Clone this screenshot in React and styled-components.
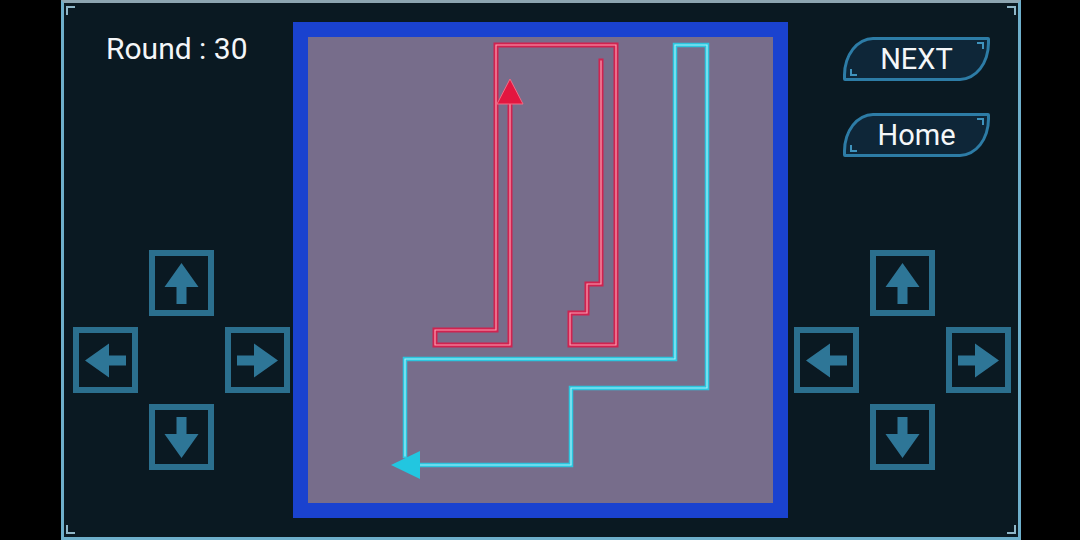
import React from "react";
import styled, { createGlobalStyle } from "styled-components";

const GlobalStyle = createGlobalStyle`
  html, body { margin: 0; padding: 0; background: #000; }
  body { font-family: Roboto, "Liberation Sans", sans-serif; }
`;

export const Page = styled.div`
  width: 1080px;
  height: 540px;
  display: flex;
  background: #000;
  overflow: hidden;
`;

export const Frame = styled.div`
  position: relative;
  box-sizing: border-box;
  margin-left: 61px;
  width: 960px;
  height: 540px;
  border: 3px solid #6eafcb;
  border-top-color: #8da5b1;
  background: #0a1922;
  display: flex;
  align-items: center;
`;

const cornerPos = {
  tl: "top: 3px; left: 2px; border-top-width: 2px; border-left-width: 2px;",
  tr: "top: 3px; right: 2px; border-top-width: 2px; border-right-width: 2px;",
  bl: "bottom: 3px; left: 2px; border-bottom-width: 2px; border-left-width: 2px;",
  br: "bottom: 3px; right: 2px; border-bottom-width: 2px; border-right-width: 2px;",
};

export const Corner = styled.span`
  position: absolute;
  width: 7px;
  height: 7px;
  border: 0 solid #8fb6c8;
  ${(p) => cornerPos[p.$pos]}
`;

export const SidePanel = styled.div`
  align-self: stretch;
  box-sizing: border-box;
  width: ${(p) => p.$width}px;
  display: flex;
  flex-direction: column;
  align-items: flex-start;
`;

export const RoundLabel = styled.div`
  margin: 31px 0 0 42px;
  color: #f4f6f8;
  font-size: 30px;
  line-height: 30px;
  white-space: nowrap;
`;

export const MenuButton = styled.button`
  position: relative;
  box-sizing: border-box;
  width: 147px;
  height: 44px;
  margin: ${(p) => p.$top}px 0 0 55px;
  padding: 0;
  border: 3px solid #2d7ca6;
  border-radius: 30px 2px 30px 2px / 38px 2px 38px 2px;
  background: #0e2638;
  color: #f4f7f9;
  font-family: Roboto, "Liberation Sans", sans-serif;
  font-size: 29px;
  line-height: 38px;
  cursor: pointer;

  &::before,
  &::after {
    content: "";
    position: absolute;
    width: 5px;
    height: 5px;
    border: 0 solid #3f93bd;
  }
  &::before {
    top: 2px;
    right: 3px;
    border-top-width: 2px;
    border-right-width: 2px;
  }
  &::after {
    bottom: 2px;
    left: 4px;
    border-bottom-width: 2px;
    border-left-width: 2px;
  }
`;

export const Dpad = styled.div`
  display: grid;
  grid-template-columns: repeat(3, 65px);
  grid-template-rows: repeat(3, 66px);
  column-gap: 11px;
  row-gap: 11px;
  margin: ${(p) => p.$top}px 0 0 ${(p) => p.$left}px;
`;

export const PadButton = styled.button`
  grid-column: ${(p) => p.$col};
  grid-row: ${(p) => p.$row};
  box-sizing: border-box;
  width: 100%;
  height: 100%;
  padding: 0;
  border: 6px solid #2b6f8e;
  background: #0a1922;
  display: flex;
  align-items: center;
  justify-content: center;
  cursor: pointer;
`;

export const ArrowIcon = styled.svg`
  width: 41px;
  height: 41px;
  transform: rotate(${(p) => p.$rot}deg);
`;

export const Board = styled.div`
  width: 465px;
  height: 466px;
  border: 15px solid #1a42cf;
  background: #776d8b;
`;

export const BoardCanvas = styled.svg`
  display: block;
  width: 465px;
  height: 466px;
`;

const directions = [
  { key: "up", col: 2, row: 1, rot: 0 },
  { key: "left", col: 1, row: 2, rot: -90 },
  { key: "right", col: 3, row: 2, rot: 90 },
  { key: "down", col: 2, row: 3, rot: 180 },
];

function Arrow({ rot }) {
  return (
    <ArrowIcon viewBox="0 0 41 41" $rot={rot}>
      <polygon
        points="20.5,0 37.5,24 25.5,24 25.5,41 15.5,41 15.5,24 3.5,24"
        fill="#2e7697"
      />
    </ArrowIcon>
  );
}

function Controls({ top, left }) {
  return (
    <Dpad $top={top} $left={left}>
      {directions.map((d) => (
        <PadButton key={d.key} $col={d.col} $row={d.row} aria-label={d.key}>
          <Arrow rot={d.rot} />
        </PadButton>
      ))}
    </Dpad>
  );
}

function NeonLine({ d, outer, inner, width }) {
  return (
    <g fill="none" strokeLinejoin="miter" strokeLinecap="square">
      <path d={d} stroke={outer} strokeWidth={width} />
      <path d={d} stroke={inner} strokeWidth="1.2" />
    </g>
  );
}

const redSnake =
  "M510 102 V345 H435 V330 H496 V45 H616 V345 H570 V313 H587 V284 H601 V61";
const blueSnake = "M405 456 V359 H675 V45 H707 V388 H571 V465 H419";

function Field() {
  return (
    <Board>
      <BoardCanvas viewBox="308 37 465 466">
        <NeonLine d={redSnake} outer="#cf2350" inner="#ff9fb3" width="5" />
        <polygon
          points="510,79 523,104 497,104"
          fill="#e3163f"
          stroke="#f36a85"
          strokeWidth="1"
        />
        <NeonLine d={blueSnake} outer="#2cc5de" inner="#a4f1fb" width="4.5" />
        <polygon points="391,465 420,451 420,479" fill="#22c6e0" />
      </BoardCanvas>
    </Board>
  );
}

export default function App() {
  return (
    <Page>
      <GlobalStyle />
      <Frame>
        <Corner $pos="tl" />
        <Corner $pos="tr" />
        <Corner $pos="bl" />
        <Corner $pos="br" />
        <SidePanel $width={229}>
          <RoundLabel>Round : 30</RoundLabel>
          <Controls top={186} left={9} />
        </SidePanel>
        <Field />
        <SidePanel $width={230}>
          <MenuButton $top={34}>NEXT</MenuButton>
          <MenuButton $top={32}>Home</MenuButton>
          <Controls top={93} left={6} />
        </SidePanel>
      </Frame>
    </Page>
  );
}
